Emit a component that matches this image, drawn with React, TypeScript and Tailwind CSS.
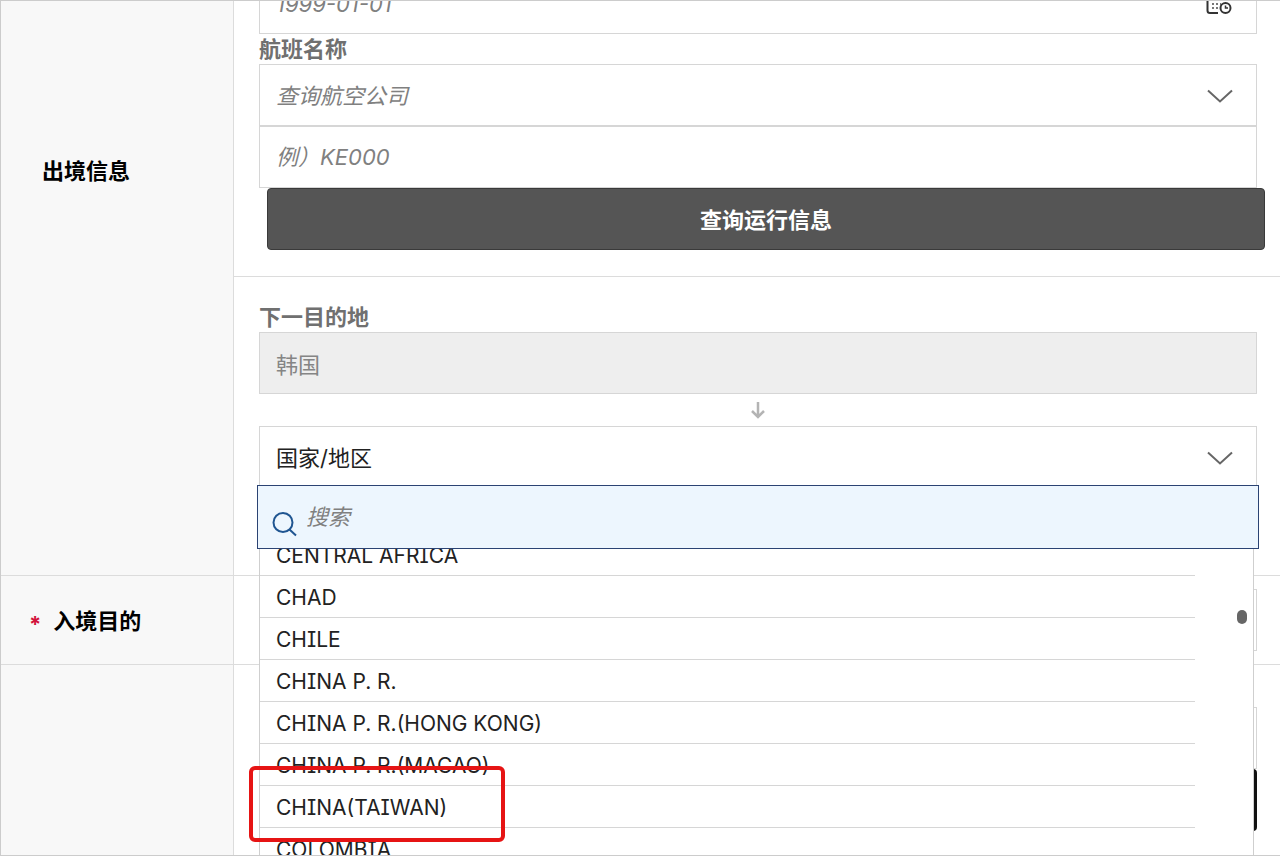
import { useState } from 'react';
import type { ReactNode } from 'react';

const COUNTRIES = [
  'CENTRAL AFRICA',
  'CHAD',
  'CHILE',
  'CHINA P. R.',
  'CHINA P. R.(HONG KONG)',
  'CHINA P. R.(MACAO)',
  'CHINA(TAIWAN)',
  'COLOMBIA',
];

const FIELD =
  'block h-[62px] w-full appearance-none rounded-none border border-[#d6d6d6] bg-white px-4 outline-none placeholder:text-[#808080] placeholder:opacity-100';

function CalendarIcon(): React.JSX.Element {
  return (
    <svg viewBox="0 0 26 26" className="mr-0.5 size-[26px]" fill="none" stroke="#333" strokeWidth="2" aria-hidden="true">
      <path d="M12 23H4a2.500 2.500 0 0 1-2.500-2.500V6A2.500 2.500 0 0 1 4 3.500h17A2.500 2.500 0 0 1 23.500 6v5" />
      <path d="M7 1v5M18 1v5M2 8.500h21" />
      <path d="M6 14h2M10 14h2M14 14h1M6 18h2M10 18h2" stroke="#777" />
      <circle cx="19.500" cy="18" r="5" />
      <path d="M19.500 15.500V18h2.500" strokeWidth="1.500" />
    </svg>
  );
}

function ChevronIcon(): React.JSX.Element {
  return (
    <svg viewBox="0 0 28 16" className="h-4 w-7" fill="none" stroke="#666" strokeWidth="2" aria-hidden="true">
      <path d="M2 3.500 14 14.500 26 3.500" />
    </svg>
  );
}

function SearchIcon(): React.JSX.Element {
  return (
    <svg viewBox="0 0 26 26" className="size-[26px]" fill="none" stroke="#1f5591" strokeWidth="2" aria-hidden="true">
      <circle cx="11" cy="11.500" r="9.500" />
      <path d="M17.500 18.500 24 24.500" />
    </svg>
  );
}

function ArrowDownIcon(): React.JSX.Element {
  return (
    <svg viewBox="0 0 16 18" className="h-[18px] w-4" fill="none" stroke="#b4b4b4" strokeWidth="2.500" aria-hidden="true">
      <path d="M8 1v15M2 10l6 6 6-6" />
    </svg>
  );
}

function FieldIcon({ children }: { children: ReactNode }): React.JSX.Element {
  return (
    <span className="pointer-events-none absolute inset-y-0 right-[23px] flex items-center">{children}</span>
  );
}

function CountryMenu({ onSelect }: { onSelect: (country: string) => void }): React.JSX.Element {
  return (
    <div className="absolute top-[59px] -right-0.5 -left-0.5 z-10">
      <div className="relative">
        <input
          type="search"
          aria-label="搜索"
          placeholder="搜索"
          className="block h-16 w-full appearance-none border border-[#2b4373] bg-[#edf6fe] pr-4 pl-12 italic outline-none placeholder:text-[#808080] placeholder:opacity-100"
        />
        <span className="pointer-events-none absolute top-[26px] left-[15px]">
          <SearchIcon />
        </span>
      </div>
      <div className="relative mr-[5px] ml-0.5 overflow-hidden border-x border-[#cfcfcf] bg-white">
        {/* list is scrolled part way into its first row */}
        <ul className="-mt-[15px] mr-[58px]" role="listbox" aria-label="国家/地区">
          {COUNTRIES.map((country) => (
            <li key={country} role="option" aria-selected={false} className="border-b border-[#d6d6d6]">
              <button
                type="button"
                onClick={() => onSelect(country)}
                className="block h-[41px] w-full px-4 pt-0.5 text-left text-[21px] text-[#222]"
              >
                {country}
              </button>
            </li>
          ))}
        </ul>
        <span className="absolute top-[61px] right-1.5 h-3.5 w-2.5 rounded-full bg-[#666]" />
      </div>
      <div className="pointer-events-none absolute top-[281px] -left-2 h-[76px] w-64 rounded-md border-4 border-[#e61414]" />
    </div>
  );
}

function RowHeading({ children, className }: { children?: ReactNode; className?: string }): React.JSX.Element {
  return (
    <div className={`w-[233px] shrink-0 border-r border-[#dcdcdc] bg-[#f8f8f8] font-bold text-black ${className ?? ''}`}>
      {children}
    </div>
  );
}

export default function App(): React.JSX.Element {
  const [country, setCountry] = useState('');

  return (
    <div className="h-screen overflow-hidden border-y border-l border-[#ccc] bg-white font-['Inter','Noto_Sans_CJK_SC',sans-serif] text-[22px] leading-[30px] [font-feature-settings:'cv08']">
      <form className="-mt-[29px] flex min-h-full flex-col" onSubmit={(e) => e.preventDefault()}>
        <div className="flex border-b border-[#dcdcdc]">
          <RowHeading className="pt-46 pl-[41px]">出境信息</RowHeading>
          <div className="min-w-0 flex-1">
            <div className="border-b border-[#dcdcdc] pr-[23px] pb-[26px] pl-[25px]">
              <div className="relative">
                <input type="text" aria-label="出境日期" placeholder="1999-01-01" className={`${FIELD} pt-0.5 italic`} />
                <FieldIcon>
                  <CalendarIcon />
                </FieldIcon>
              </div>
              <label htmlFor="airline" className="block font-bold text-[#707070]">
                航班名称
              </label>
              <div className="relative">
                <select id="airline" defaultValue="" className={`${FIELD} pt-0.5 text-[#808080] italic`}>
                  <option value="">查询航空公司</option>
                </select>
                <FieldIcon>
                  <ChevronIcon />
                </FieldIcon>
              </div>
              <input type="text" aria-label="航班号" placeholder="例）KE000" className={`${FIELD} italic`} />
              <button
                type="button"
                className="relative left-2 block h-[62px] w-full rounded border border-[#3a3a3a] bg-[#555] pt-0.5 font-bold text-white"
              >
                查询运行信息
              </button>
            </div>

            <div className="pt-[25px] pr-[23px] pb-[87px] pl-[25px]">
              <label htmlFor="origin" className="block font-bold text-[#707070]">
                下一目的地
              </label>
              <input id="origin" type="text" value="韩国" readOnly className={`${FIELD} bg-[#eee]! text-[#858585]`} />
              <div className="flex h-8 items-center justify-center">
                <ArrowDownIcon />
              </div>
              <div className="relative">
                <select
                  aria-label="国家/地区"
                  value={country}
                  onChange={(e) => setCountry(e.currentTarget.value)}
                  className={`${FIELD} pt-0.5 text-[#222]`}
                >
                  <option value="">国家/地区</option>
                  {COUNTRIES.map((name) => (
                    <option key={name} value={name}>
                      {name}
                    </option>
                  ))}
                </select>
                <FieldIcon>
                  <ChevronIcon />
                </FieldIcon>
                <CountryMenu onSelect={setCountry} />
              </div>
            </div>
          </div>
        </div>

        <div className="flex border-b border-[#dcdcdc]">
          <RowHeading className="flex items-center gap-3 pt-0.5 pl-7">
            <span className="pt-1.5 text-[#d2143c]">*</span>
            <label htmlFor="purpose">入境目的</label>
          </RowHeading>
          <div className="min-w-0 flex-1 py-[13px] pr-[23px] pl-[25px]">
            <input id="purpose" type="text" className={FIELD} />
          </div>
        </div>

        <div className="flex flex-1">
          <RowHeading />
          <div className="min-w-0 flex-1 pt-[42px] pr-[23px] pb-24 pl-[25px]">
            <input type="text" aria-label="地址" className={FIELD} />
            <button type="button" aria-label="地址搜索" className="block h-[62px] w-full rounded bg-[#111]" />
          </div>
        </div>
      </form>
    </div>
  );
}
